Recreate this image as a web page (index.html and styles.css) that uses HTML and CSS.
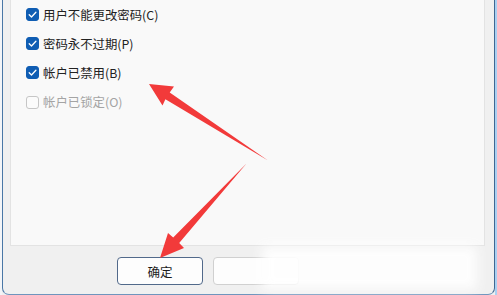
FILE: index.html
```html
<!DOCTYPE html>
<html lang="zh-CN">
<head>
<meta charset="utf-8">
<link rel="stylesheet" href="styles.css">
</head>
<body>
<div class="desk">
  <div class="edge-left"></div>
  <div class="frame">
    <div class="panel">
      <label class="row"><span class="box checked"><svg viewBox="0 0 13 13"><path d="M3.2 6.7 L5.5 9 L9.9 4.3"/></svg></span><span class="label">用户不能更改密码(C)</span></label>
      <label class="row"><span class="box checked"><svg viewBox="0 0 13 13"><path d="M3.2 6.7 L5.5 9 L9.9 4.3"/></svg></span><span class="label">密码永不过期(P)</span></label>
      <label class="row"><span class="box checked"><svg viewBox="0 0 13 13"><path d="M3.2 6.7 L5.5 9 L9.9 4.3"/></svg></span><span class="label">帐户已禁用(B)</span></label>
      <label class="row disabled"><span class="box"></span><span class="label">帐户已锁定(O)</span></label>
    </div>
    <div class="actions">
      <button class="btn primary">确定</button>
      <button class="btn"></button>
    </div>
  </div>
  <div class="edge-right"></div>
</div>
<div class="smear"></div>
<svg class="arrows" width="497" height="295" viewBox="0 0 497 295">
  <polygon points="149,84 174,86.5 169.7,92.4 268,160.5 165.4,99.2 162.5,105.5" fill="#f23a3a"/>
  <polygon points="160,258 168,233 173.2,237.5 246.5,163.5 179.2,242.9 184,248" fill="#f23a3a"/>
</svg>
</body>
</html>
```
FILE: styles.css
```css
html, body {
  margin: 0;
  padding: 0;
}
body {
  width: 497px;
  height: 295px;
  overflow: hidden;
  position: relative;
  background: #f0f0f0;
  font-family: "Noto Sans CJK SC", "Noto Sans", sans-serif;
}
.desk {
  display: flex;
  height: 295px;
}
.edge-left {
  width: 2px;
  background: #f3f5f8;
}
.edge-right {
  width: 2px;
  background: #a9d0f2;
}
.frame {
  flex: 1;
  display: flex;
  flex-direction: column;
  background: #f0f0f0;
  border-left: 1px solid #4a77a6;
  border-right: 1px solid #3f6791;
  border-bottom: 1px solid #6f95bd;
  border-bottom-left-radius: 7px;
  border-bottom-right-radius: 7px;
  box-sizing: border-box;
}
.panel {
  height: 246px;
  box-sizing: border-box;
  margin: 0 9px 0 7px;
  background: #f9f9f9;
  border: 1px solid #e3e3e3;
  border-top: none;
  padding-left: 15px;
  display: flex;
  flex-direction: column;
}
.row {
  height: 29.2px;
  display: flex;
  align-items: center;
  gap: 4px;
  font-size: 12.4px;
  color: #222222;
}
.box {
  width: 13px;
  height: 13px;
  box-sizing: border-box;
  border-radius: 3px;
  border: 1px solid #c6c6c6;
  background: #fbfbfb;
  display: flex;
}
.box svg {
  width: 13px;
  height: 13px;
  margin: -1px;
}
.box path {
  fill: none;
  stroke: #fff;
  stroke-width: 1.3;
  stroke-linecap: round;
  stroke-linejoin: round;
}
.box.checked {
  background: #0f5db3;
  border-color: #0f5db3;
}
.disabled .label {
  color: #a4a4a4;
}
.actions {
  display: flex;
  gap: 10px;
  padding: 11px 0 0 114px;
}
.btn {
  width: 86px;
  height: 28px;
  box-sizing: border-box;
  border: 1px solid #d0d0d0;
  border-radius: 4px;
  background: #fdfdfd;
  font-family: "Noto Sans CJK SC", sans-serif;
  font-size: 12.5px;
  color: #1b1b1b;
  padding: 0;
}
.btn.primary {
  border-color: #51698a;
}
.smear {
  position: absolute;
  left: 262px;
  top: 246px;
  width: 215px;
  height: 44px;
  background: #ffffff;
  filter: blur(6px);
  opacity: 0.92;
}
.arrows {
  position: absolute;
  left: 0;
  top: 0;
}
```
